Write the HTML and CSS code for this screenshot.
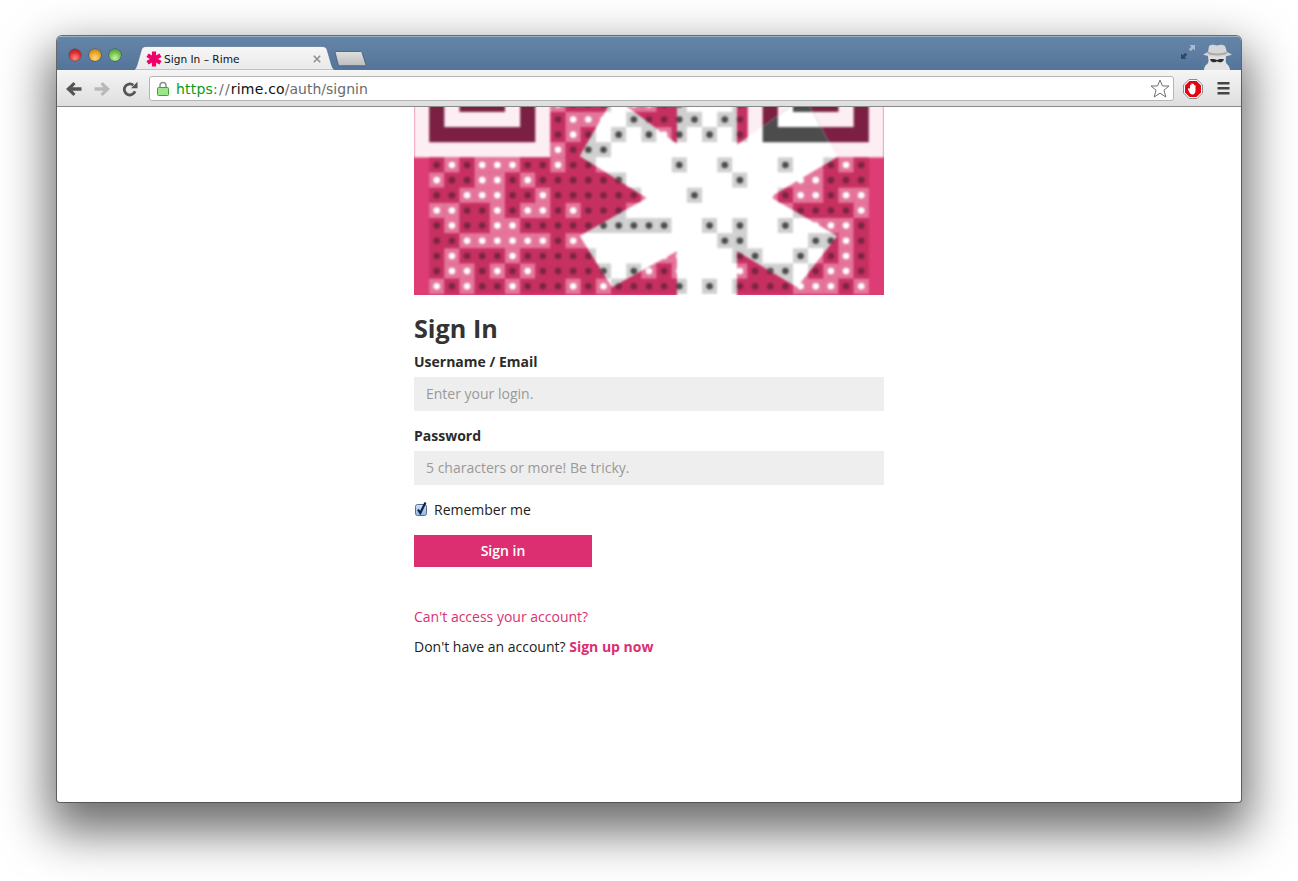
FILE: index.html
```html
<!DOCTYPE html>
<html lang="en">
<head>
<meta charset="utf-8">
<title>Sign In – Rime</title>
<link rel="stylesheet" href="styles.css">
</head>
<body>
<div class="window">
  <header class="titlebar">
    <div class="lights">
      <span class="light red"></span>
      <span class="light amber"></span>
      <span class="light green"></span>
    </div>
    <div class="tab">
      <svg class="tab-shape" width="203" height="24" viewBox="0 0 203 24"><defs><linearGradient id="tabfill" x1="0" y1="0" x2="0" y2="1"><stop offset="0" stop-color="#f6f6f6"/><stop offset="1" stop-color="#eaeaea"/></linearGradient></defs><path d="M0 24C2 24 3 22 4 19L8.500 3.500C9.300 1.500 10.500 .5 13 .5H189C192 .5 193 1.500 194 3.500L198.500 19C199.500 22 200.500 24 203 24Z" fill="url(#tabfill)" stroke="#4a6585" stroke-width=".6"/></svg>
      <svg class="favicon" width="16" height="16" viewBox="0 0 16 16"><g stroke="#f0006a" stroke-width="4.200"><path d="M8 .5V15.500"/><path d="M1.500 4.200L14.500 11.800"/><path d="M1.500 11.800L14.500 4.200"/></g></svg>
      <span class="tab-title">Sign In – Rime</span>
      <svg class="tab-close" width="8" height="8" viewBox="0 0 8 8"><path d="M.8 .8L7.200 7.200M7.200 .8L.8 7.200" stroke="#8c8c8c" stroke-width="1.500"/></svg>
    </div>
    <svg class="newtab" width="33" height="17" viewBox="0 0 33 17"><defs><linearGradient id="ntfill" x1="0" y1="0" x2="0" y2="1"><stop offset="0" stop-color="#dfdfdf"/><stop offset="1" stop-color="#bdbdbd"/></linearGradient></defs><path d="M2 1.500C1.500 1.500 1 2 1.200 2.800L4 14C4.300 15.200 5 15.800 6 15.800H30.500C31.500 15.800 32 15 31.700 14L28 2.500C27.700 1.700 27.200 1.500 26.500 1.500Z" fill="url(#ntfill)" stroke="#3f5a7a" stroke-width=".8"/></svg>
    <div class="title-right">
      <svg class="fullscreen" width="16" height="16" viewBox="0 0 16 16"><path d="M15 1H9.500L11.300 2.800L8.800 5.300L10.700 7.200L13.200 4.700L15 6.500Z" fill="#a8bccf"/><path d="M1 15H6.500L4.700 13.200L7.200 10.700L5.300 8.800L2.800 11.300L1 9.500Z" fill="#2c4968"/></svg>
      <svg class="incognito" width="32" height="26" viewBox="0 0 32 26"><path d="M7 11C7 16 9 18 5 21C3 23 3 25 3 26H29C29 24 28 22 26 20C24 18 25 16 25 11Z" fill="#e2e2e2"/><path d="M8 2C11 0 13 1 16 1.500C19 1 21 0 24 2L26 8L31 10.500C25 13.500 9 13.500 2 10.500L7 8Z" fill="#d6d6d6"/><path d="M7 7.800C12 10 20 10 25.500 7.800L26.300 9.800C20 12 12 12 6.500 9.800Z" fill="#aaa"/><path d="M9 15.200C12 14.600 14.500 15 16 16C17.500 15 20 14.600 23 15.200C22.500 18.500 18 19.200 16 17.300C14 19.200 9.500 18.500 9 15.200Z" fill="#2e2e2e"/></svg>
    </div>
  </header>
  <nav class="toolbar">
    <svg class="tool back" width="18" height="16" viewBox="0 0 18 16"><path d="M16.500 6.300H7.500L10.500 3.300L8.500 1L1 8L8.500 15L10.500 12.700L7.500 9.700H16.500Z" fill="#555"/></svg>
    <svg class="tool forward" width="18" height="16" viewBox="0 0 18 16"><path d="M1.500 6.300H10.500L7.500 3.300L9.500 1L17 8L9.500 15L7.500 12.700L10.500 9.700H1.500Z" fill="#b9b9b9"/></svg>
    <svg class="tool reload" width="16" height="16" viewBox="0 0 16 16"><path d="M13 10.300A5.500 5.500 0 1 1 11.300 4.200" fill="none" stroke="#555" stroke-width="2.800"/><path d="M9 7.300L15.500 7.300L15.500 .8Z" fill="#555"/></svg>
    <div class="omnibox">
      <svg class="lock" width="12" height="15" viewBox="0 0 12 15"><path d="M3 7V4.500A3 3 0 0 1 9 4.500V7" fill="none" stroke="#8a8f8a" stroke-width="1.500"/><rect x=".5" y="6.500" width="11" height="8" rx="1" fill="#9be58a" stroke="#3fa33a"/></svg>
      <span class="url"><span class="url-https">https</span><span class="url-sep">://</span><span class="url-host">rime.co</span><span class="url-path">/auth/signin</span></span>
      <svg class="star" width="20" height="19" viewBox="0 0 20 19"><path d="M10 1L12.500 7H19L14 11.200L15.800 18L10 14.200L4.200 18L6 11.200L1 7H7.500Z" fill="#fff" stroke="#6f6f6f"/></svg>
    </div>
    <svg class="abp" width="20" height="20" viewBox="0 0 20 20"><path d="M6 .5H14L19.500 6V14L14 19.500H6L.5 14V6Z" fill="#fff" stroke="#8c8c8c"/><path d="M6.500 2H13.500L18 6.500V13.500L13.500 18H6.500L2 13.500V6.500Z" fill="#e20613"/><path d="M7 9V6.500C7 5.500 8.300 5.500 8.300 6.500V5C8.300 4 9.700 4 9.700 5V5.500C9.700 4.500 11 4.500 11 5.500V6.500C11 5.700 12.500 5.700 12.500 6.500V11.500C12.500 14 11 15.500 9.500 15.500C8 15.500 7 14.500 6.500 13.500L5 10.500C4.700 9.500 5.700 8.700 6.500 9.700Z" fill="#fff"/></svg>
    <svg class="menu" width="13" height="13" viewBox="0 0 13 13"><path d="M.5 0H12.500V2.500H.5ZM.5 5H12.500V7.500H.5ZM.5 10H12.500V12.500H.5Z" fill="#444"/></svg>
  </nav>
  <main class="page">
    <div class="column">
      <svg id="qr" class="qr" width="470" height="188" viewBox="414 107 470 188" aria-label="Rime QR code">
        <defs>
          <clipPath id="starclip"><polygon points="614,97 677,144 677,90 737,90 737,145 800,100 810,107 837,157 770,197 837,236 797,287 737,251 737,300 677,300 677,251 612,287 580,236 647,198 580,156"/></clipPath>
        </defs>
        <g class="qr-blur">
          <g id="qr-pink" class="pink"></g>
          <g clip-path="url(#starclip)"><g id="qr-gray" class="gray"></g></g>
        </g>
      </svg>
      <h1 class="heading">Sign In</h1>
      <form class="form">
        <label class="field-label" for="login">Username / Email</label>
        <input class="field" id="login" type="text" placeholder="Enter your login.">
        <label class="field-label" for="password">Password</label>
        <input class="field" id="password" type="password" placeholder="5 characters or more! Be tricky.">
        <label class="remember">
          <svg class="check" width="14" height="16" viewBox="0 0 14 16"><defs><linearGradient id="cb" x1="0" y1="0" x2="0" y2="1"><stop offset="0" stop-color="#cfe2f7"/><stop offset="1" stop-color="#8fb6e6"/></linearGradient></defs><rect x="1.500" y="3.500" width="11" height="11" rx="2" fill="url(#cb)" stroke="#5b7191"/><path d="M4 8.500L6.300 12L11.500 1.500" fill="none" stroke="#10233f" stroke-width="2.200"/></svg>
          <span>Remember me</span>
        </label>
        <button class="submit" type="button">Sign in</button>
      </form>
      <p class="line access"><a class="link" href="#">Can't access your account?</a></p>
      <p class="line">Don't have an account? <a class="link strong" href="#">Sign up now</a></p>
    </div>
  </main>
</div>
<script src="app.js"></script>
</body>
</html>
```
FILE: styles.css
```css
* { box-sizing: border-box; }
html, body { margin: 0; height: 100%; background: #fff; }
body { padding: 36px 57px 79px; overflow: hidden; font-family: "Open Sans", sans-serif; color: #222; }

.window {
  width: 1184px;
  height: 766px;
  display: flex;
  flex-direction: column;
  background: #fff;
  border-radius: 5px 5px 3px 3px;
  box-shadow: 0 0 0 1px rgba(70,70,70,.75), 0 22px 48px 8px rgba(0,0,0,.58);
  overflow: hidden;
}

.titlebar {
  height: 34px;
  display: flex;
  align-items: flex-end;
  background: linear-gradient(#6585a8, #54749a);
  border-top: 1px solid #9ab0c6;
}
.lights { display: flex; gap: 8px; padding: 0 0 9px 12px; width: 76px; flex: none; }
.light { width: 12px; height: 12px; border-radius: 50%; box-shadow: 0 0 0 .5px rgba(30,40,50,.6); }
.red { background: radial-gradient(circle at 50% 75%, #ff8a80, #dc2a2f 55%, #a8161c); }
.amber { background: radial-gradient(circle at 50% 75%, #ffd97c, #e9a121 55%, #a96f12); }
.green { background: radial-gradient(circle at 50% 75%, #c9f59c, #6fc04a 55%, #3d8a2d); }

.tab { position: relative; width: 203px; height: 24px; flex: none; display: flex; align-items: center; padding: 1px 0 0 13px; }
.tab-shape { position: absolute; left: 0; top: 0; }
.favicon { position: relative; flex: none; }
.tab-title { position: relative; margin-left: 2px; padding-top: 1px; font: 10.600px "DejaVu Sans", sans-serif; color: #111; width: 141px; white-space: nowrap; }
.tab-close { position: relative; flex: none; margin-left: 8px; }
.newtab { flex: none; margin: 0 0 3px -2px; }

.title-right { margin-left: auto; display: flex; align-items: flex-end; gap: 5px; padding-right: 8px; }
.fullscreen { margin-bottom: 10px; }
.incognito { display: block; }

.toolbar {
  height: 37px;
  display: flex;
  align-items: center;
  padding: 1px 11px 0 8px;
  background: linear-gradient(#f5f5f5, #dedede);
  border-bottom: 1px solid #8a8a8a;
}
.tool { flex: none; }
.forward { margin-left: 10px; }
.reload { margin-left: 11px; }
.omnibox {
  flex: 1;
  height: 25px;
  margin: 0 9px 0 11px;
  display: flex;
  align-items: center;
  padding: 0 3px 0 7px;
  background: #fff;
  border: 1px solid #b4b4b4;
  border-radius: 3px;
}
.lock { flex: none; }
.url { margin-left: 7px; font: 14px "DejaVu Sans", sans-serif; letter-spacing: .2px; white-space: nowrap; color: #6a6a6a; }
.url-https { color: #0a9c12; }
.url-sep { color: #6a6a6a; letter-spacing: 1.200px; }
.url-path { color: #6a6a6a; letter-spacing: 0; }
.url-host { color: #111; }
.star { margin-left: auto; flex: none; }
.abp { flex: none; }
.menu { flex: none; margin-left: 14px; }

.page { flex: 1; display: flex; justify-content: center; }
.column { width: 470px; }
.qr { display: block; }
.qr-blur { filter: blur(.8px); }

.pink .base { fill: #dd3c74; }
.pink .pale { fill: #fdeef4; }
.pink .ring, .pink .core { fill: #7b2042; }
.pink .hole { fill: #fdeef4; }
.pink .cell-d { fill: #c5305f; }
.pink .cell-l { fill: #e5769c; }
.pink .dot-d { fill: #7a2445; }
.pink .dot-l { fill: #fff; }
.gray .base, .gray .pale, .gray .hole, .gray .cell-l, .gray .dot-l { fill: #fff; }
.gray .ring, .gray .core { fill: #4c4c4c; }
.gray .cell-d { fill: #cfcfcf; }
.gray .dot-d { fill: #4c4c4c; }

.heading { margin: 13px 0 4px; font-size: 25.200px; line-height: 40px; font-weight: 700; color: #333; }
.form { display: flex; flex-direction: column; align-items: flex-start; }
.field-label { font-size: 14px; line-height: 20px; font-weight: 700; color: #2b2b2b; margin-bottom: 5px; }
.field {
  width: 470px;
  height: 34px;
  margin-bottom: 15px;
  padding: 0 12px 1px;
  border: 0;
  border-radius: 0;
  background: #eee;
  font: 14px "Open Sans", sans-serif;
  color: #333;
}
.field::placeholder { color: #999; opacity: 1; }
.remember { display: flex; align-items: center; height: 20px; margin-top: -1px; font-size: 14px; color: #222; }
.check { margin-right: 6px; flex: none; }
.submit {
  width: 178px;
  height: 32px;
  margin-top: 16px;
  padding: 0 0 2px;
  border: 0;
  background: #dc2f72;
  color: #fff;
  font: 600 14px "Open Sans", sans-serif;
}
.line { margin: 10px 0 0; font-size: 14px; line-height: 20px; color: #222; }
.access { margin-top: 40px; }
.link { color: #dc2f72; text-decoration: none; }
.strong { font-weight: 700; }
```
FILE: app.js
```js
(function () {
  var NS = "http://www.w3.org/2000/svg";
  var X0 = 429.16, Y8 = 157.4, M = 15.16;
  var rows = {
    4: "xxxxxxxx0111000110001xxxxxxxx",
    5: "xxxxxxxx1000011111011xxxxxxxx",
    6: "xxxxxxxx1010101010101xxxxxxxx",
    7: "xxxxxxxx0111000000000xxxxxxxx",
    8: "10100011011000001001000100101",
    9: "01100101111110000000100000111",
    10: "11000110111111000100000100100",
    11: "00110100101110000000000011110",
    12: "10110011111111110010100100001",
    13: "11000000100000000001100001101",
    14: "10111011111000000000110010101",
    15: "10010101111101010000011101001",
    16: "01011011101011111010111100010"
  };

  function add(g, tag, cls, attrs) {
    var el = document.createElementNS(NS, tag);
    el.setAttribute("class", cls);
    Object.keys(attrs).forEach(function (k) { el.setAttribute(k, attrs[k]); });
    g.appendChild(el);
  }
  function box(g, cls, x1, y1, x2, y2) {
    add(g, "rect", cls, { x: x1, y: y1, width: x2 - x1, height: y2 - y1 });
  }
  function finder(g, c) {
    var x = X0 + c * M, top = 90;
    box(g, "pale", x - M, top, x + 8 * M, Y8);
    box(g, "ring", x, top, x + 7 * M, Y8 - M);
    box(g, "hole", x + M, top, x + 6 * M, Y8 - 2 * M);
    box(g, "core", x + 2 * M, top, x + 5 * M, Y8 - 3 * M);
  }
  function draw(id) {
    var g = document.getElementById(id);
    box(g, "base", 400, 90, 900, 310);
    finder(g, 0);
    finder(g, 22);
    Object.keys(rows).forEach(function (r) {
      var row = rows[r];
      for (var c = 0; c < row.length; c++) {
        var ch = row[c];
        if (ch === "x") continue;
        var x = X0 + c * M, y = Y8 + (r - 8) * M;
        var kind = ch === "1" ? "d" : "l";
        add(g, "rect", "cell-" + kind, { x: x, y: y, width: M, height: M });
        add(g, "circle", "dot-" + kind, { cx: x + M / 2, cy: y + M / 2, r: 3.300 });
      }
    });
  }
  draw("qr-pink");
  draw("qr-gray");
})();
```
